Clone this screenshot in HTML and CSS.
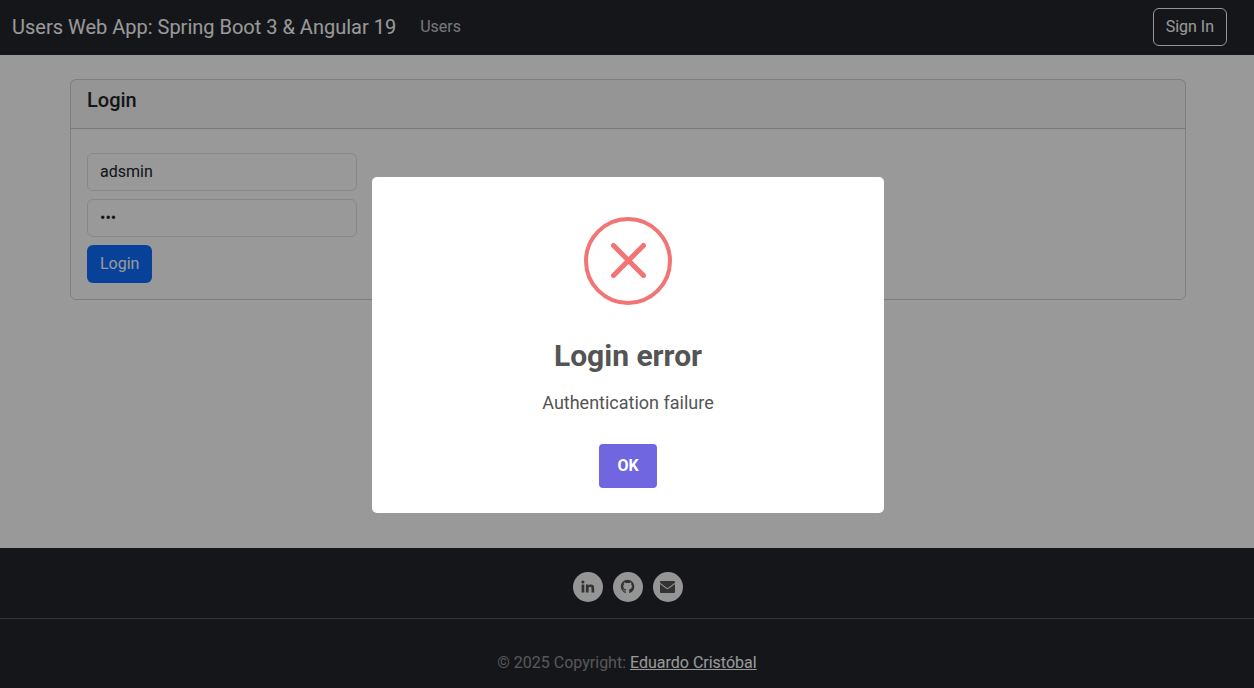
FILE: index.html
```html
<!DOCTYPE html>
<html lang="en">
<head>
<meta charset="utf-8">
<meta name="viewport" content="width=device-width, initial-scale=1">
<title>Users Web App</title>
<link rel="stylesheet" href="styles.css">
</head>
<body>
<header class="navbar">
  <a class="brand" href="#">Users Web App: Spring Boot 3 &amp; Angular 19</a>
  <nav class="nav"><a class="nav-link" href="#">Users</a></nav>
  <button class="btn btn-outline" type="button">Sign In</button>
</header>
<main class="main">
  <section class="card">
    <div class="card-header"><h5 class="card-title">Login</h5></div>
    <form class="card-body">
      <input class="input" type="text" aria-label="Username" value="adsmin">
      <input class="input" type="password" aria-label="Password" value="abc">
      <button class="btn btn-primary" type="button">Login</button>
    </form>
  </section>
</main>
<footer class="footer">
  <div class="social">
    <a class="social-link" href="#" aria-label="LinkedIn"><svg class="icon" viewBox="0 0 16 16"><path d="M1.6 5.6h2.7v8H1.6zM2.9 1.4a1.5 1.5 0 1 1 0 3.1 1.5 1.5 0 0 1 0-3.1zM5.9 5.6h2.6v1.1c.5-.8 1.3-1.3 2.5-1.3 2.4 0 3.2 1.5 3.2 3.8v4.4h-2.7V9.7c0-1.1-.2-2-1.4-2s-1.5.9-1.5 2v3.9H5.9z"/></svg></a>
    <a class="social-link" href="#" aria-label="GitHub"><svg class="icon" viewBox="-1 -1 19 19"><path d="M8 0C3.58 0 0 3.58 0 8c0 3.54 2.29 6.53 5.47 7.59.4.07.55-.17.55-.38 0-.19-.01-.82-.01-1.49-2.01.37-2.53-.49-2.69-.94-.09-.23-.48-.94-.82-1.13-.28-.15-.68-.52-.01-.53.63-.01 1.08.58 1.23.82.72 1.21 1.87.87 2.33.66.07-.52.28-.87.51-1.07-1.78-.2-3.64-.89-3.64-3.95 0-.87.31-1.59.82-2.15-.08-.2-.36-1.02.08-2.12 0 0 .67-.21 2.2.82.64-.18 1.32-.27 2-.27s1.36.09 2 .27c1.53-1.04 2.2-.82 2.2-.82.44 1.1.16 1.92.08 2.12.51.56.82 1.27.82 2.15 0 3.07-1.87 3.75-3.65 3.95.29.25.54.73.54 1.48 0 1.07-.01 1.93-.01 2.2 0 .21.15.46.55.38A8.01 8.01 0 0 0 16 8c0-4.42-3.58-8-8-8"/></svg></a>
    <a class="social-link" href="#" aria-label="Email"><svg class="icon" viewBox="0 0 16 16"><path d="M.9 2h13.2c.5 0 .9.4.9.9v.8L7.5 9.2 0 3.7v-.8C0 2.4.4 2 .9 2zM0 5l6.4 4.7c.7.5 1.5.5 2.2 0L15 5v8.1c0 .5-.4.9-.9.9H.9c-.5 0-.9-.4-.9-.9z"/></svg></a>
  </div>
  <p class="copyright">© 2025 Copyright: <a class="author" href="#">Eduardo Cristóbal</a></p>
</footer>
<div class="overlay">
  <div class="dialog" role="dialog" aria-modal="true" aria-labelledby="dialog-title">
    <svg class="dialog-icon" viewBox="0 0 88 88"><circle cx="44" cy="44" r="42"/><path d="M29.5 28.5l30 30M59.5 28.5l-30 30"/></svg>
    <h2 class="dialog-title" id="dialog-title">Login error</h2>
    <p class="dialog-text">Authentication failure</p>
    <button class="dialog-ok" type="button">OK</button>
  </div>
</div>
</body>
</html>
```
FILE: styles.css
```css
* {
  box-sizing: border-box;
}

body {
  display: flex;
  flex-direction: column;
  min-height: 100vh;
  margin: 0;
  background: #fff;
  color: #212529;
  font: 16px/24px Roboto, "Liberation Sans", sans-serif;
}

.navbar {
  display: flex;
  align-items: center;
  padding: 8px 27px 9px 12px;
  background: #24262b;
}

.brand {
  margin-right: 16px;
  color: #fff;
  font-size: 20px;
  text-decoration: none;
}

.nav {
  flex: 1;
}

.nav-link {
  padding: 8px;
  color: rgba(255, 255, 255, 0.75);
  text-decoration: none;
}

.btn {
  padding: 6px 12px;
  border: 1px solid transparent;
  border-radius: 6px;
  color: #fff;
  font: inherit;
}

.btn-outline {
  border-color: #f8f9fa;
  background: transparent;
}

.btn-primary {
  background: #0d6efd;
}

.main {
  flex: 1;
  padding: 24px 12px 24px 14px;
}

.card {
  max-width: 1116px;
  margin: 0 auto;
  border: 1px solid rgba(0, 0, 0, 0.175);
  border-radius: 6px;
}

.card-header {
  padding: 8px 16px 16px;
  border-bottom: 1px solid rgba(0, 0, 0, 0.175);
  background: rgba(33, 37, 41, 0.03);
}

.card-title {
  margin: 0;
  font-size: 20px;
  font-weight: 500;
}

.card-body {
  display: flex;
  flex-direction: column;
  align-items: flex-start;
  gap: 8px;
  padding: 24px 16px 16px;
}

.input {
  width: 100%;
  max-width: 270px;
  height: 38px;
  padding: 5px 12px 7px;
  border: 1px solid #dee2e6;
  border-radius: 6px;
  background: #fff;
  color: #212529;
  font: inherit;
}

.footer {
  background: #24262b;
  text-align: center;
}

.social {
  display: flex;
  justify-content: center;
  gap: 10px;
  padding: 24px 0 16px 2px;
  border-bottom: 1px solid #55585c;
}

.social-link {
  display: grid;
  place-items: center;
  width: 30px;
  height: 30px;
  border-radius: 50%;
  background: #f8f9fa;
  color: #555;
}

.icon {
  height: 16px;
  fill: currentColor;
}

.copyright {
  margin: 0;
  padding: 32px 0 13px;
  color: rgba(255, 255, 255, 0.5);
}

.author {
  color: #fff;
}

.overlay {
  position: fixed;
  inset: 0;
  display: grid;
  place-items: center;
  padding: 12px 10px 10px 12px;
  background: rgba(0, 0, 0, 0.4);
}

.dialog {
  display: flex;
  flex-direction: column;
  align-items: center;
  width: 100%;
  max-width: 512px;
  padding: 40px 20px 25px;
  border-radius: 5px;
  background: #fff;
  color: #545454;
  text-align: center;
}

.dialog-icon {
  width: 88px;
  fill: none;
  stroke: #f27474;
  stroke-width: 4px;
}

.dialog-icon path {
  stroke-width: 5px;
  stroke-linecap: round;
}

.dialog-title {
  margin: 33px 0 15px;
  font-size: 30px;
  font-weight: 700;
  line-height: 36px;
}

.dialog-text {
  margin: 0 0 28px;
  font-size: 18px;
  line-height: 27px;
}

.dialog-ok {
  padding: 10px 18px;
  border: 0;
  border-radius: 4px;
  background: #7066e0;
  color: #fff;
  font: 700 16px/24px Roboto, "Liberation Sans", sans-serif;
}
```
